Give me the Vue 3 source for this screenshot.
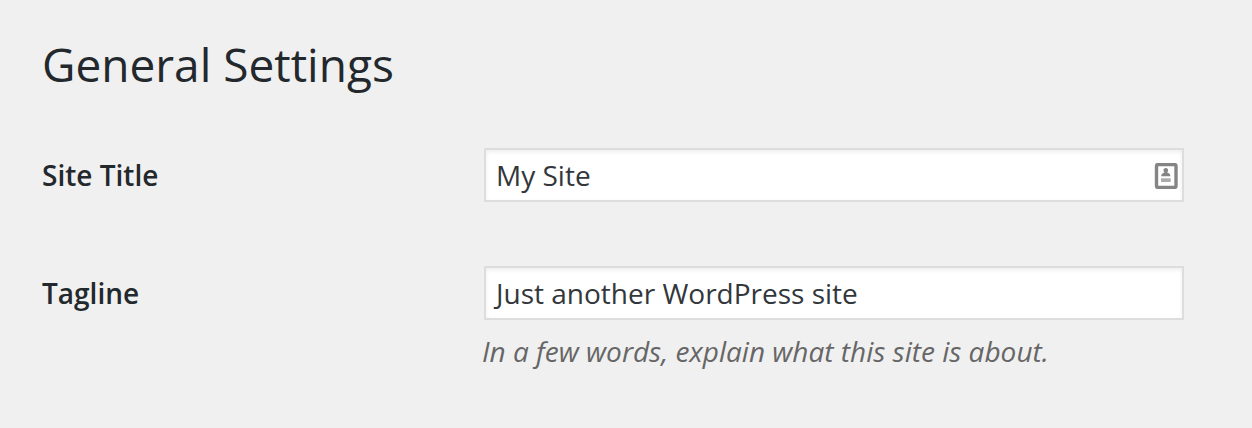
<script setup>
import { ref } from 'vue';

const siteTitle = ref('My Site');
const tagline = ref('Just another WordPress site');
</script>

<template>
  <main class="wrap">
    <h1>General Settings</h1>
    <form class="form" @submit.prevent>
      <div class="row">
        <label for="blogname">Site Title</label>
        <div class="field">
          <input id="blogname" v-model="siteTitle" type="text" />
          <svg class="card-icon" viewBox="0 0 24 26" aria-hidden="true">
            <rect x="2.5" y="1.5" width="19.5" height="23" rx="1.5" fill="#fff" stroke="#858585" stroke-width="3.4" />
            <path
              d="M11.8 5c1.5 0 2.3 1 2.3 2.2 0 .9-.4 1.6-1 2.2 1.900.4 3.300 1.500 3.300 3.800H7.200c0-2.300 1.400-3.400 3.300-3.800-.6-.6-1-1.300-1-2.200C9.500 6 10.300 5 11.800 5z"
              fill="#858585"
            />
            <path d="M7 15.300h9.700v3.700H7z" fill="#ababab" />
          </svg>
        </div>
      </div>
      <div class="row">
        <label for="blogdescription">Tagline</label>
        <div class="field">
          <input
            id="blogdescription"
            v-model="tagline"
            type="text"
            aria-describedby="tagline-description"
          />
          <p id="tagline-description" class="description">
            In a few words, explain what this site is about.
          </p>
        </div>
      </div>
    </form>
  </main>
</template>

<style>
body {
  margin: 0;
  background: #f0f0f0;
}
</style>

<style scoped>
.wrap {
  padding: 34px 66px 34px 42px;
  color: #23282d;
  font-family: 'Open Sans', sans-serif;
  font-size: 28px;
}

h1 {
  margin: 0;
  font-size: 46px;
  font-weight: 400;
  line-height: 60px;
}

.form {
  display: flex;
  flex-direction: column;
  gap: 64px;
  margin-top: 54px;
}

.row {
  display: grid;
  grid-template-columns: 440px 1fr;
}

label {
  font-weight: 600;
  line-height: 54px;
}

.field {
  position: relative;
}

input {
  display: block;
  box-sizing: border-box;
  width: calc(100% - 4px);
  height: 54px;
  margin: 0 2px;
  padding: 0 6px;
  border: 2px solid #ddd;
  border-radius: 0;
  background: #fff;
  box-shadow: inset 0 2px 4px rgba(0, 0, 0, 0.07);
  color: #32373c;
  font: inherit;
  /* keeps the overhang of a leading J inside the box */
  text-indent: 4px;
  outline: none;
}

.card-icon {
  position: absolute;
  top: 15px;
  right: 8px;
  width: 24px;
  height: 26px;
}

.description {
  margin: 12px 0 0;
  color: #666;
  font-style: italic;
  line-height: 38px;
}
</style>
